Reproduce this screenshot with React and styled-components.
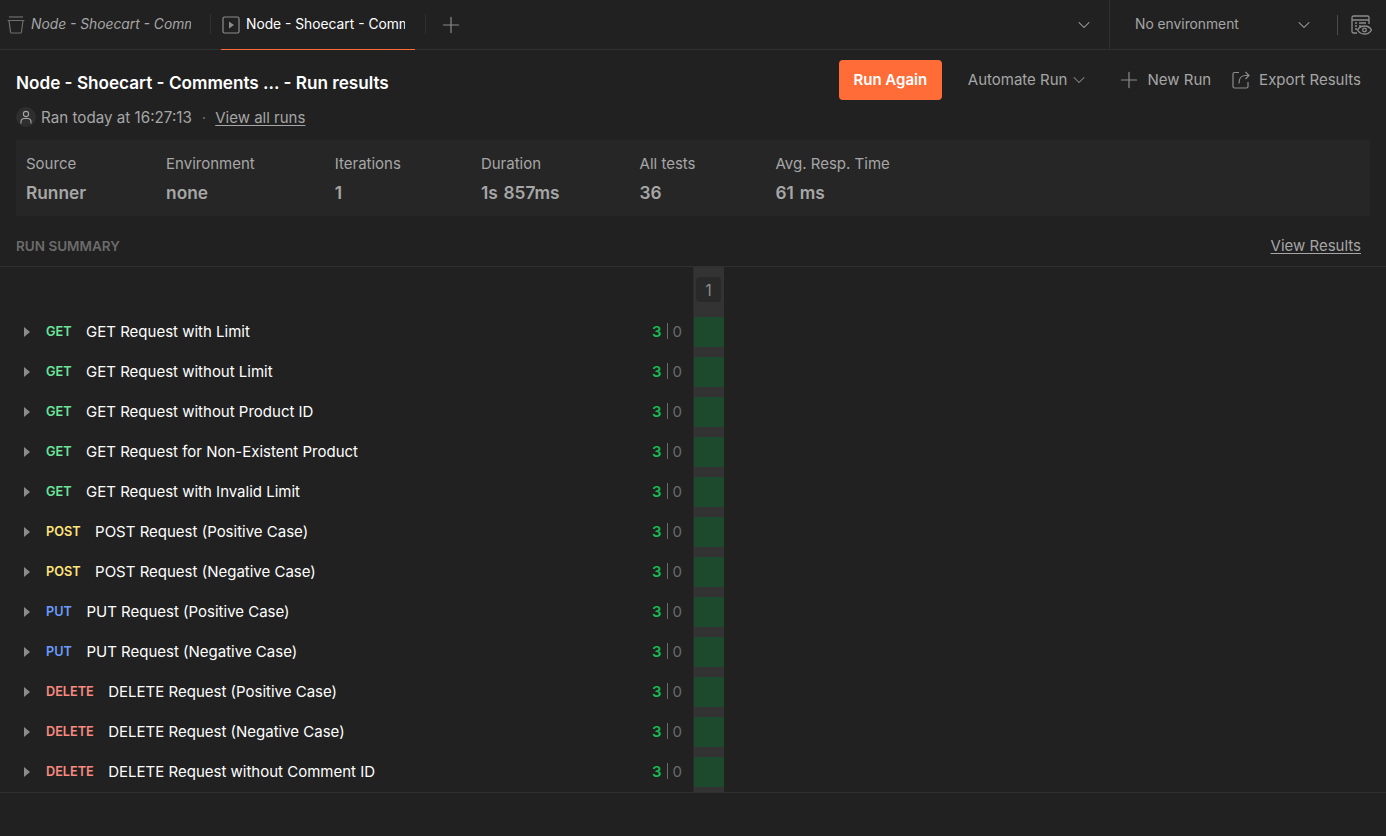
import React from 'react';
import styled, { createGlobalStyle } from 'styled-components';
import { ChevronDown, Plus } from 'lucide-react';

const GlobalStyle = createGlobalStyle`
  html, body {
    margin: 0;
    height: 100%;
    background: #212121;
  }
  body {
    font-family: Inter, "Liberation Sans", sans-serif;
    font-size: 15px;
    color: #fff;
    overflow: hidden;
  }
`;

const Page = styled.div`
  width: 1386px;
  height: 836px;
  background: #212121;
`;

const TabBar = styled.div`
  display: flex;
  align-items: stretch;
  height: 49px;
  border-bottom: 1px solid #303030;
`;

const Tab = styled.div`
  position: relative;
  display: flex;
  align-items: center;
  gap: 6px;
  width: ${(p) => p.$width}px;
  margin-left: ${(p) => p.$offset || 0}px;
  padding-left: ${(p) => p.$left}px;
  box-sizing: border-box;
  color: ${(p) => (p.$active ? '#fff' : '#a6a6a6')};
  font-style: ${(p) => (p.$active ? 'normal' : 'italic')};
  font-size: 13.8px;
  ${(p) => p.$active && `
    &::after {
      content: '';
      position: absolute;
      left: 0;
      right: 0;
      bottom: -1px;
      height: 1px;
      background: #ff6c37;
    }
  `}
`;

const TabLabel = styled.span`
  width: ${(p) => p.$width}px;
  margin-bottom: 2px;
  overflow: hidden;
  white-space: nowrap;
`;

const TabDivider = styled.div`
  width: 1px;
  height: 20px;
  margin-top: 14px;
  margin-left: ${(p) => p.$left || 0}px;
  background: #303030;
`;

const AddTab = styled.div`
  display: flex;
  align-items: center;
  margin-left: 12px;
  color: #8c8c8c;
`;

const TabSpacer = styled.div`
  flex: 1;
`;

const TabMenu = styled.div`
  display: flex;
  align-items: center;
  width: 35px;
  color: #a6a6a6;
`;

const EnvSelect = styled.div`
  display: flex;
  align-items: center;
  justify-content: space-between;
  width: 228px;
  box-sizing: border-box;
  padding: 0 23px 0 25px;
  border-left: 1px solid #303030;
  color: #a6a6a6;
  font-size: 13.8px;
`;

const EnvLabel = styled.span`
  margin-bottom: 2px;
`;

const EnvActions = styled.div`
  display: flex;
  align-items: center;
  width: 49px;
  color: #8c8c8c;
`;

const EnvRule = styled.div`
  width: 1px;
  height: 20px;
  margin-right: 13px;
  background: #4a4a4a;
`;

const Header = styled.div`
  display: flex;
  justify-content: space-between;
  align-items: flex-start;
  height: 90px;
  box-sizing: border-box;
  padding: 10px 25px 0 16px;
`;

const TitleBlock = styled.div`
  display: flex;
  flex-direction: column;
  padding-top: 13px;
`;

const Title = styled.h1`
  margin: 0;
  font-size: 17.15px;
  line-height: 20px;
  font-weight: 600;
  color: #fff;
`;

const Meta = styled.div`
  display: flex;
  align-items: center;
  margin-top: 14px;
  height: 20px;
  color: #a6a6a6;
  font-size: 15.2px;
`;

const Avatar = styled.div`
  display: flex;
  align-items: center;
  justify-content: center;
  width: 20px;
  height: 20px;
  margin-right: 5px;
  border-radius: 50%;
  background: #2e2e2e;
  color: #a6a6a6;
`;

const Dot = styled.span`
  margin: 0 9px 0 10px;
  color: #6b6b6b;
`;

const TextLink = styled.a`
  color: #a6a6a6;
  font-size: 15px;
  text-decoration: underline;
  text-underline-offset: 2px;
`;

const Actions = styled.div`
  display: flex;
  align-items: center;
`;

const RunAgain = styled.button`
  width: 103px;
  height: 40px;
  margin-right: 26px;
  padding: 0 0 2px;
  border: none;
  border-radius: 4px;
  background: #ff6c37;
  color: #fff;
  font: 600 15px Inter, "Liberation Sans", sans-serif;
`;

const GhostAction = styled.div`
  display: flex;
  align-items: center;
  gap: ${(p) => p.$gap || 8}px;
  margin: 0 ${(p) => p.$right || 0}px 2px 0;
  color: #a6a6a6;
  font-size: 15px;
  white-space: nowrap;

  svg {
    margin-top: 2px;
    color: #8c8c8c;
  }
`;

const Stats = styled.div`
  display: flex;
  gap: 80px;
  height: 76px;
  box-sizing: border-box;
  margin: 0 16px;
  padding: 13px 10px 0;
  background: #262626;
`;

const Stat = styled.div`
  display: flex;
  flex-direction: column;
  gap: 10px;
`;

const StatLabel = styled.div`
  font-size: 15px;
  line-height: 21px;
  color: #a6a6a6;
`;

const StatValue = styled.div`
  margin-top: -1px;
  font-size: 17.3px;
  line-height: 20px;
  font-weight: 600;
  word-spacing: 1.5px;
  color: #a6a6a6;
`;

const SummaryBar = styled.div`
  display: flex;
  justify-content: space-between;
  align-items: center;
  height: 51px;
  box-sizing: border-box;
  padding: 10px 25px 0 16px;
  border-bottom: 1px solid #303030;
`;

const SummaryTitle = styled.div`
  font-size: 13.5px;
  font-weight: 600;
  color: #6b6b6b;
`;

const SummaryLink = styled(TextLink)`
  margin-bottom: 2px;
`;

const Matrix = styled.div`
  display: flex;
  border-bottom: 1px solid #303030;
`;

const Requests = styled.div`
  width: 694px;
  box-sizing: border-box;
  padding-top: 45px;
  border-right: 1px solid #2b2b2b;
`;

const RequestRow = styled.div`
  display: flex;
  align-items: center;
  height: 40px;
  padding: 0 11px 0 23px;
`;

const Caret = styled.svg`
  width: 8px;
  height: 10px;
  margin-right: 15px;
  fill: #8c8c8c;
`;

const Method = styled.span`
  margin: 0 14.5px 2px 0;
  font-size: 12.7px;
  font-weight: 600;
  color: ${(p) => p.$color};
`;

const RequestName = styled.span`
  flex: 1;
  margin-bottom: 2px;
  font-size: 15px;
  color: #fff;
`;

const Counts = styled.div`
  display: flex;
  align-items: center;
  margin-bottom: 2px;
  font-size: 15px;
  color: #6b6b6b;
`;

const Passed = styled.span`
  color: #16bb52;
  font-weight: 600;
`;

const CountRule = styled.span`
  width: 1px;
  height: 16px;
  margin: 0 5px;
  background: #6b6b6b;
`;

const IterationColumn = styled.div`
  width: 30px;
  padding-top: 10px;
  padding-bottom: 5px;
  background: #333333;
`;

const IterationBadge = styled.div`
  display: flex;
  align-items: center;
  justify-content: center;
  width: 25px;
  height: 25px;
  margin: 0 auto 15px 2px;
  border-radius: 4px;
  background: #292929;
  color: #8c8c8c;
  font-size: 16px;
`;

const ResultCell = styled.div`
  height: 30px;
  margin-bottom: 10px;
  background: #1d4a2c;

  &:last-child {
    margin-bottom: 0;
  }
`;

const METHOD_COLORS = {
  GET: '#6be69a',
  POST: '#ffe47e',
  PUT: '#6a9bff',
  DELETE: '#f88a80',
};

const REQUESTS = [
  ['GET', 'GET Request with Limit'],
  ['GET', 'GET Request without Limit'],
  ['GET', 'GET Request without Product ID'],
  ['GET', 'GET Request for Non-Existent Product'],
  ['GET', 'GET Request with Invalid Limit'],
  ['POST', 'POST Request (Positive Case)'],
  ['POST', 'POST Request (Negative Case)'],
  ['PUT', 'PUT Request (Positive Case)'],
  ['PUT', 'PUT Request (Negative Case)'],
  ['DELETE', 'DELETE Request (Positive Case)'],
  ['DELETE', 'DELETE Request (Negative Case)'],
  ['DELETE', 'DELETE Request without Comment ID'],
];

const STATS = [
  ['Source', 'Runner'],
  ['Environment', 'none'],
  ['Iterations', '1'],
  ['Duration', '1s 857ms'],
  ['All tests', '36'],
  ['Avg. Resp. Time', '61 ms'],
];

const BucketIcon = () => (
  <svg width="18" height="18" viewBox="0 0 18 18" fill="none" stroke="#6f6f6f" strokeWidth="1.2">
    <path d="M2 1h14" />
    <path d="M.6 4.5h16.800M2 4.500l1.500 11.500c.1.600.4 1 1 1h9c.6 0 .9-.4 1-1L16 4.500" />
  </svg>
);

const RunnerIcon = () => (
  <svg width="18" height="18" viewBox="0 0 18 18" fill="none">
    <rect x="1" y="1" width="16" height="16" rx="1.5" stroke="#8c8c8c" strokeWidth="1.2" />
    <path d="M7 5.500l5 3.500-5 3.500z" fill="#8c8c8c" />
  </svg>
);

const ReportIcon = () => (
  <svg width="21" height="20" viewBox="0 0 21 20" fill="none" stroke="#8c8c8c" strokeWidth="1.3">
    <path d="M6 18H2.500C1.700 18 1 17.300 1 16.500v-14C1 1.700 1.700 1 2.500 1h14c.8 0 1.500.7 1.500 1.500V9" />
    <path d="M1 5h17M4 8h2M8 8h7M4 11h2M8 11h2M4 14h2" />
    <path d="M6.500 15c1.500-2.600 3.900-4 7-4s5.500 1.400 7 4c-1.500 2.600-3.900 4-7 4s-5.500-1.400-7-4z" fill="#212121" />
    <circle cx="13.500" cy="15" r="1.800" />
  </svg>
);

const PersonIcon = () => (
  <svg width="12" height="14" viewBox="0 0 12 14" fill="none" stroke="currentColor" strokeWidth="1.1">
    <circle cx="6" cy="4" r="2.600" />
    <path d="M1 13.500V12c0-2 1.600-3.500 3.500-3.500h3c1.900 0 3.500 1.500 3.500 3.500v1.500" />
  </svg>
);

const ExportIcon = () => (
  <svg width="18" height="18" viewBox="0 0 18 18" fill="none" stroke="#8c8c8c" strokeWidth="1.2">
    <path d="M7 1.500H2.500C1.700 1.500 1 2.200 1 3v12.500c0 .8.7 1.500 1.500 1.500h12c.8 0 1.500-.7 1.500-1.500V11" />
    <path d="M7 12.500c0-4.500 2-8 6-8h4M13.500 1L17 4.500 13.500 8" />
  </svg>
);

const App = () => (
  <Page>
    <GlobalStyle />
    <TabBar>
      <Tab $width={210} $left={7}>
        <BucketIcon />
        <TabLabel $width={160}>Node - Shoecart - Comments</TabLabel>
      </Tab>
      <TabDivider />
      <Tab $active $width={194} $left={1} $offset={10}>
        <RunnerIcon />
        <TabLabel $width={159}>Node - Shoecart - Comments</TabLabel>
      </Tab>
      <TabDivider $left={10} />
      <AddTab>
        <Plus size={26} strokeWidth={1.1} />
      </AddTab>
      <TabSpacer />
      <TabMenu>
        <ChevronDown size={20} strokeWidth={1.25} />
      </TabMenu>
      <EnvSelect>
        <EnvLabel>No environment</EnvLabel>
        <ChevronDown size={20} strokeWidth={1.25} />
      </EnvSelect>
      <EnvActions>
        <EnvRule />
        <ReportIcon />
      </EnvActions>
    </TabBar>

    <Header>
      <TitleBlock>
        <Title>Node - Shoecart - Comments ... - Run results</Title>
        <Meta>
          <Avatar>
            <PersonIcon />
          </Avatar>
          Ran today at 16:27:13
          <Dot>·</Dot>
          <TextLink>View all runs</TextLink>
        </Meta>
      </TitleBlock>
      <Actions>
        <RunAgain>Run Again</RunAgain>
        <GhostAction $gap={2} $right={27}>
          Automate Run
          <ChevronDown size={20} strokeWidth={1.25} />
        </GhostAction>
        <GhostAction $gap={5} $right={21}>
          <Plus size={26} strokeWidth={1.1} />
          New Run
        </GhostAction>
        <GhostAction $gap={9}>
          <ExportIcon />
          Export Results
        </GhostAction>
      </Actions>
    </Header>

    <Stats>
      {STATS.map(([label, value]) => (
        <Stat key={label}>
          <StatLabel>{label}</StatLabel>
          <StatValue>{value}</StatValue>
        </Stat>
      ))}
    </Stats>

    <SummaryBar>
      <SummaryTitle>RUN SUMMARY</SummaryTitle>
      <SummaryLink>View Results</SummaryLink>
    </SummaryBar>

    <Matrix>
      <Requests>
        {REQUESTS.map(([method, name]) => (
          <RequestRow key={name}>
            <Caret viewBox="0 0 8 10">
              <path d="M1 0l6 5-6 5z" />
            </Caret>
            <Method $color={METHOD_COLORS[method]}>{method}</Method>
            <RequestName>{name}</RequestName>
            <Counts>
              <Passed>3</Passed>
              <CountRule />
              0
            </Counts>
          </RequestRow>
        ))}
      </Requests>
      <IterationColumn>
        <IterationBadge>1</IterationBadge>
        {REQUESTS.map(([, name]) => (
          <ResultCell key={name} />
        ))}
      </IterationColumn>
    </Matrix>
  </Page>
);

export default App;
